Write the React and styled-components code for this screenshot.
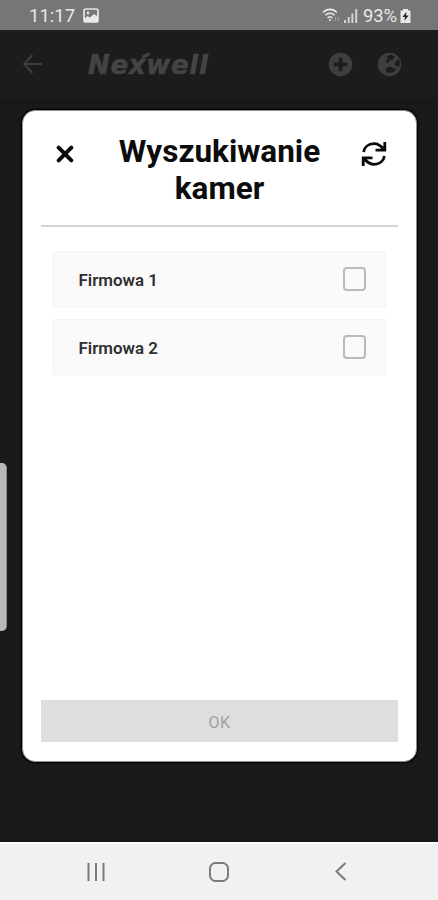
import React, { useState } from 'react';
import styled, { createGlobalStyle } from 'styled-components';

const GlobalStyle = createGlobalStyle`
    * {
        box-sizing: border-box;
    }

    body {
        margin: 0;
        font-family: Roboto, "Noto Sans", sans-serif;
    }

    button {
        padding: 0;
        border: 0;
        background: none;
        font-family: inherit;
    }

    svg {
        display: block;
    }
`

const Phone = styled.div`
    position: relative;
    display: flex;
    flex-direction: column;
    width: 438px;
    height: 900px;
    overflow: hidden;
    background-color: #191919;
`

const StatusBar = styled.header`
    display: flex;
    justify-content: space-between;
    align-items: center;
    height: 30px;
    padding: 1px 27px 0 29px;
    background-color: #767676;
    color: #e8e8e8;
    font-size: 18.5px;
`

const StatusGroup = styled.div`
    display: flex;
    align-items: center;
    gap: ${props => props.gap}px;
`

const Battery = styled.span`
    letter-spacing: -0.1px;
    margin-left: 2px;
`

const AppBar = styled.div`
    display: flex;
    align-items: center;
    height: 68px;
    padding: 0 36px 0 22px;
    background-color: #1c1c1c;
    color: #3e3e3e;
`

const Logo = styled.div`
    flex: 1;
    display: flex;
    margin: 2px 0 0 45px;
    color: #444;
    font-family: "DejaVu Sans", sans-serif;
    font-size: 26px;
    font-weight: bold;
    font-style: italic;
    line-height: 30px;
    letter-spacing: 0.7px;
    -webkit-text-stroke: 0.5px;
`

const Accent = styled.i`
    width: 8px;
    height: 3px;
    margin: 4px -4px 0;
    background-color: currentColor;
    transform: rotate(-28deg);
`

const AppActions = styled.div`
    display: flex;
    gap: 24px;
`

const Screen = styled.main`
    flex: 1;
`

const NavBar = styled.nav`
    display: flex;
    justify-content: space-between;
    align-items: center;
    height: 58px;
    padding: 0 91px 1px 86px;
    border-top: 2px solid #fff;
    background-color: #f1f1f1;
    color: #7b7b7b;
`

const EdgeHandle = styled.div`
    position: absolute;
    top: 463px;
    left: 0;
    width: 7px;
    height: 168px;
    border-right: 1px solid #8a8a8a;
    border-radius: 0 5px 5px 0;
    background-color: #b9b9b9;
`

const Modal = styled.section`
    position: absolute;
    top: 110px;
    left: 22px;
    display: flex;
    flex-direction: column;
    width: 395px;
    height: 652px;
    padding: 0 19px 19px;
    border: 1px solid #8c8c8c;
    border-radius: 13px;
    background-color: #fff;
    box-shadow: 0 0 2px 1px #000;
`

const ModalHeader = styled.div`
    display: flex;
    justify-content: space-between;
    align-items: flex-start;
    height: 116px;
    padding: 22px 11px 0 15px;
    border-bottom: 2px solid #d3d3d3;
    margin: 0 -1px;
`

const Title = styled.h1`
    width: 220px;
    margin: 0;
    padding-left: 4px;
    color: #0c0c0c;
    font-size: 31.5px;
    font-weight: bold;
    line-height: 37px;
    text-align: center;
`

const IconButton = styled.button`
    margin-top: ${props => props.top}px;
    color: #0a0a0a;
    cursor: pointer;
`

const CameraList = styled.div`
    flex: 1;
    display: flex;
    flex-direction: column;
    gap: 11px;
    padding: 24px 11px 0;
`

const CameraRow = styled.label`
    display: flex;
    justify-content: space-between;
    align-items: center;
    height: 57px;
    padding: 1px 19px 0 24.5px;
    border: 1px solid #f5f5f5;
    background-color: #fafafa;
    color: #2f2f2f;
    font-size: 16.9px;
    font-weight: 600;
`

const Checkbox = styled.input`
    appearance: none;
    width: 23px;
    height: 24px;
    margin: 0 0 2px;
    border: 2px solid #bababa;
    border-radius: 4px;

    &:checked{
        background-color: #8c8c8c;
    }
`

const OkButton = styled.button`
    height: 42px;
    margin: 0 -1px;
    padding-top: 2px;
    background-color: #dedede;
    color: #a0a0a0;
    font-size: 16px;
    letter-spacing: 0.6px;
`

const PictureIcon = () => (
    <svg width="16" height="15" viewBox="0 0 16 15" fill="none">
        <rect x="1" y="1" width="14" height="13" rx="2" stroke="currentColor" strokeWidth="1.7" />
        <circle cx="5" cy="5" r="1.4" fill="currentColor" />
        <path d="M1 11 L4.5 8 L7 9.5 L11 6 L15 8.5 V14 H1 Z" fill="currentColor" />
    </svg>
)

const WifiIcon = () => (
    <svg width="19" height="15" viewBox="0 0 19 15" fill="none" stroke="currentColor" strokeWidth="1.6">
        <path d="M1 4.5 C5 0.3 11 0.3 15 4.5" />
        <path d="M3.3 7.3 C6 4.5 10 4.5 12.7 7.3" />
        <path d="M5.5 10 C7 8.5 9 8.5 10.5 10" />
        <circle cx="8" cy="12" r="1" fill="currentColor" stroke="none" />
        <path d="M13.5 9 V13 M16.5 9 V13" stroke="#999" strokeWidth="1.3" />
    </svg>
)

const SignalIcon = () => (
    <svg width="14" height="14" viewBox="0 0 14 14" fill="#d2d2d2">
        <path d="M0 11h2v3H0zM3.7 8h2v6h-2zM7.4 4.5h2V14h-2zM11.2 0h2v14h-2z" />
    </svg>
)

const BatteryIcon = () => (
    <svg width="11" height="14" viewBox="0 0 11 14">
        <path d="M3 0 H8 V1.5 H10.5 V14 H0.5 V1.5 H3 Z" fill="currentColor" />
        <path d="M6.5 2.8 L2.5 8 H5 L4.3 12 L8.7 6.5 H6 Z" fill="#262626" />
    </svg>
)

const BackIcon = () => (
    <svg width="21" height="20" viewBox="0 0 21 20" fill="none" stroke="currentColor" strokeWidth="2">
        <path d="M10.5 1 L2 10 L10.5 19 M2 10 H20" />
    </svg>
)

const PlusIcon = () => (
    <svg width="25" height="25" viewBox="0 0 24 24">
        <circle cx="12" cy="12" r="11.3" fill="currentColor" />
        <path d="M12 5.5 V18.5 M5.5 12 H18.5" stroke="#1c1c1c" strokeWidth="3.4" />
    </svg>
)

const GlobeIcon = () => (
    <svg width="25" height="25" viewBox="0 0 24 24">
        <circle cx="12" cy="12" r="11.3" fill="currentColor" />
        <path d="M9.5 4 L14 2.5 L17 4.5 L15.5 7 L12.5 8 L10.5 10.5 L8 9 L10.5 6.5 Z" fill="#1c1c1c" />
        <path d="M19 7.5 L21.5 7 L22 13 L19.5 14.5 L17 12 Z" fill="#1c1c1c" />
        <path d="M8 16 L12 14 L18.5 16.5 L16 19.5 L9.5 20 Z" fill="#1c1c1c" />
    </svg>
)

const CloseIcon = () => (
    <svg width="18" height="18" viewBox="0 0 18 18" stroke="currentColor" strokeWidth="4" strokeLinecap="round">
        <path d="M2.7 2.7 L15.3 15.3 M15.3 2.7 L2.7 15.3" />
    </svg>
)

const RefreshIcon = () => (
    <svg width="26" height="26" viewBox="0 0 26 26" fill="none" stroke="currentColor" strokeWidth="2.8">
        <path d="M2.6 11 C3.3 6 7.5 2.7 13 2.7 C16.5 2.7 19.5 4.3 22.5 8" />
        <path d="M23.8 1 V9.2 H14.5" />
        <path d="M23.8 10 H17.5 L23.8 4 Z" fill="currentColor" stroke="none" />
        <path d="M23.4 15 C22.7 20 18.5 23.3 13 23.3 C9.5 23.3 6.5 21.7 3.5 18" />
        <path d="M2.2 25 V16.8 H11.5" />
        <path d="M2.2 16 H8.5 L2.2 22 Z" fill="currentColor" stroke="none" />
    </svg>
)

const RecentsIcon = () => (
    <svg width="20" height="20" viewBox="0 0 20 20" stroke="currentColor" strokeWidth="2">
        <path d="M2.5 1 V19 M10 1 V19 M17.5 1 V19" />
    </svg>
)

const HomeIcon = () => (
    <svg width="20" height="20" viewBox="0 0 20 20" fill="none" stroke="currentColor" strokeWidth="2">
        <rect x="1" y="1" width="18" height="18" rx="5.5" />
    </svg>
)

const ChevronIcon = () => (
    <svg width="16" height="19" viewBox="-4 0 16 19" fill="none" stroke="currentColor" strokeWidth="2">
        <path d="M10.5 1 L1.5 9.5 L10.5 18" />
    </svg>
)

const cameras = ['Firmowa 1', 'Firmowa 2'];

const CameraModal = () => {
    const [selected, setSelected] = useState([]);

    const toggle = (name) => {
        setSelected(selected.includes(name) ? selected.filter(el => el !== name) : [...selected, name]);
    }

    return (
        <Modal>
            <ModalHeader>
                <IconButton top={12} aria-label='Zamknij'><CloseIcon /></IconButton>
                <Title>Wyszukiwanie kamer</Title>
                <IconButton top={8} aria-label='Odśwież'><RefreshIcon /></IconButton>
            </ModalHeader>
            <CameraList>
                {cameras.map(name => (
                    <CameraRow key={name}>
                        {name}
                        <Checkbox type='checkbox' checked={selected.includes(name)} onChange={() => toggle(name)} />
                    </CameraRow>
                ))}
            </CameraList>
            <OkButton>OK</OkButton>
        </Modal>
    )
}

const App = () => {
    return (
        <>
            <GlobalStyle />
            <Phone>
                <StatusBar>
                    <StatusGroup gap={8}>
                        <span>11:17</span>
                        <PictureIcon />
                    </StatusGroup>
                    <StatusGroup gap={3}>
                        <WifiIcon />
                        <SignalIcon />
                        <Battery>93%</Battery>
                        <BatteryIcon />
                    </StatusGroup>
                </StatusBar>
                <AppBar>
                    <BackIcon />
                    <Logo>Nex<Accent />well</Logo>
                    <AppActions>
                        <PlusIcon />
                        <GlobeIcon />
                    </AppActions>
                </AppBar>
                <Screen />
                <NavBar>
                    <RecentsIcon />
                    <HomeIcon />
                    <ChevronIcon />
                </NavBar>
                <EdgeHandle />
                <CameraModal />
            </Phone>
        </>
    )
}
export default App;
